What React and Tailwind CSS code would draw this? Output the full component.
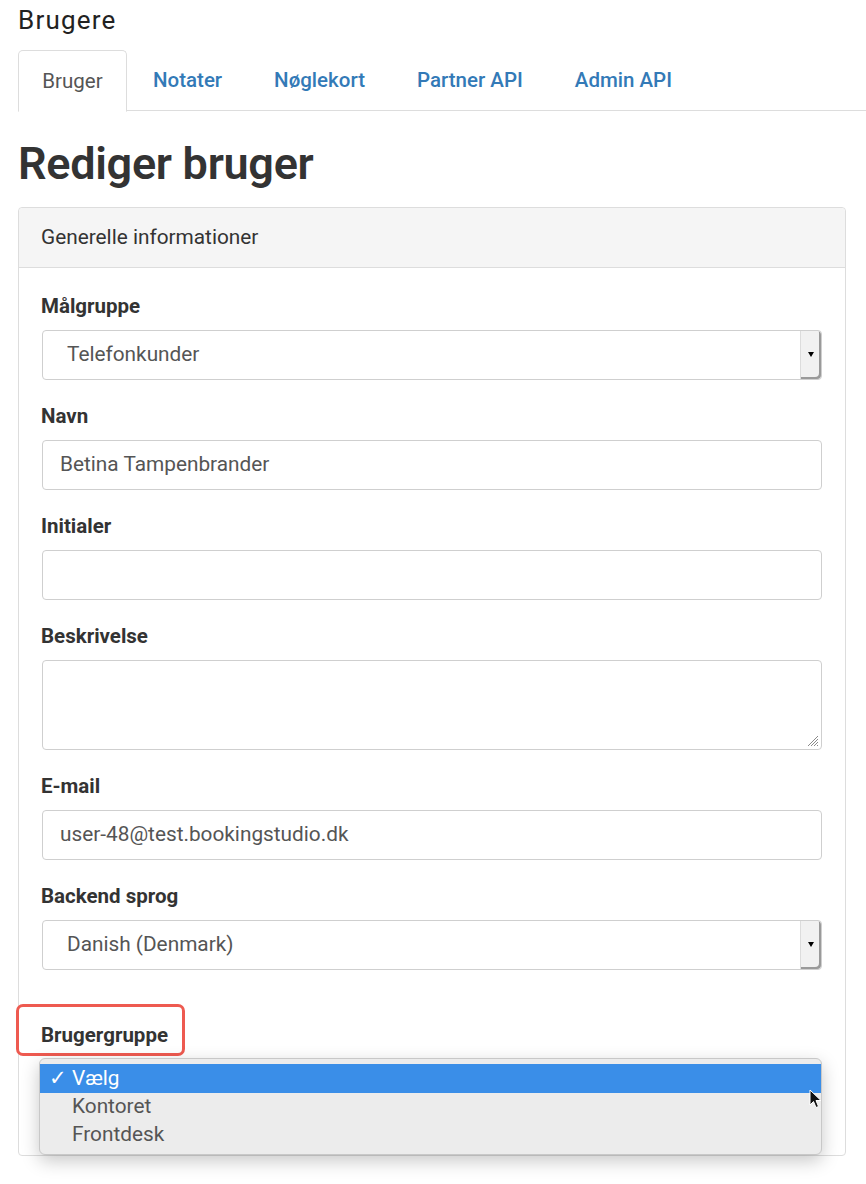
import React from 'react';

const TABS = ['Bruger', 'Notater', 'Nøglekort', 'Partner API', 'Admin API'];

function Label({ children }) {
  return <div className="h-[22px] mb-[13px] text-[20.5px] leading-[22px] font-bold text-[#333]">{children}</div>;
}

function TextInput({ value }) {
  return (
    <div className="h-[50px] w-[780px] ml-px rounded-[4px] border border-[#cfcfcf] bg-white px-[17px] flex items-center text-[20.8px] text-[#555]">
      {value}
    </div>
  );
}

function SelectBox({ value }) {
  return (
    <div className="h-[50px] w-[780px] ml-px rounded-[4px] border border-[#cfcfcf] bg-white flex items-center text-[20.8px] text-[#555]">
      <div className="flex-1 pl-[24px]">{value}</div>
      <div className="h-[48px] w-[21px] bg-[#f1f1f1] border-l border-[#dcdcdc] rounded-r-[4px] shadow-[inset_-2px_-2px_0_#9a9a9a] flex items-center justify-center">
        <span className="block w-0 h-0 border-l-[3.5px] border-r-[3.5px] border-t-[5px] border-l-transparent border-r-transparent border-t-black -mt-[2px] -ml-[1px]" />
      </div>
    </div>
  );
}

export default function App() {
  return (
    <div className="min-h-[1184px] bg-white pl-[18px] font-['Roboto',sans-serif] text-[#333]">
      <div className="pt-[5px] h-[50px] text-[26px] leading-[30px] tracking-[1.2px] text-[#222]">Brugere</div>

      {/* tabs */}
      <div className="flex border-b border-[#dddddd] h-[61px]">
        {TABS.map((t, i) =>
          i === 0 ? (
            <div
              key={t}
              className="w-[109px] h-[62px] -mb-px border border-[#dddddd] border-b-white bg-white rounded-t-[5px] flex items-center justify-center text-[20.5px] text-[#555]"
            >
              {t}
            </div>
          ) : (
            <div key={t} className="h-full flex items-center px-[26px] text-[20.5px] font-medium text-[#337ab7]">
              {t}
            </div>
          )
        )}
      </div>

      <h1 className="mt-[28px] h-[57px] text-[45px] leading-[50px] font-semibold text-[#333] tracking-[-0.3px]">Rediger bruger</h1>

      {/* panel */}
      <div className="mt-[11px] w-[828px] border border-[#dddddd] rounded-[4px] bg-white">
        <div className="h-[60px] bg-[#f5f5f5] border-b border-[#dddddd] rounded-t-[4px] pl-[22px] flex items-center text-[20.8px] text-[#333]">
          Generelle informationer
        </div>

        <div className="pt-[27px] pl-[22px]">
          <div className="mb-[25px]">
            <Label>Målgruppe</Label>
            <SelectBox value="Telefonkunder" />
          </div>
          <div className="mb-[25px]">
            <Label>Navn</Label>
            <TextInput value="Betina Tampenbrander" />
          </div>
          <div className="mb-[25px]">
            <Label>Initialer</Label>
            <TextInput value="" />
          </div>
          <div className="mb-[25px]">
            <Label>Beskrivelse</Label>
            <div className="relative h-[90px] w-[780px] ml-px rounded-[4px] border border-[#cfcfcf] bg-white">
              <svg className="absolute right-[2px] bottom-[2px]" width="14" height="14" viewBox="0 0 14 14">
                <path d="M13 3 L3 13 M13 6 L6 13 M13 9 L9 13 M13 12 L12 13" stroke="#8a8a8a" strokeWidth="1" />
              </svg>
            </div>
          </div>
          <div className="mb-[25px]">
            <Label>E-mail</Label>
            <TextInput value="user-48@test.bookingstudio.dk" />
          </div>
          <div className="mb-[54px]">
            <Label>Backend sprog</Label>
            <SelectBox value="Danish (Denmark)" />
          </div>

          <div className="relative">
            <div className="absolute -left-[25px] -top-[20px] w-[169px] h-[52px] rounded-[7px] border-[3px] border-[#ee5a50]" />
            <div className="h-[22px] text-[20.5px] leading-[22px] font-bold text-[#333]">Brugergruppe</div>
          </div>

          {/* open select list */}
          <div className="relative mt-[12px] -ml-[2px] w-[783px] h-[97px] rounded-[6px] bg-[#ececec] border border-[#c8c8c8] shadow-[0_6px_18px_rgba(0,0,0,0.22)] pt-[5px] text-[20.8px]">
            <div className="h-[29px] bg-[#3a8ee8] text-white flex items-center pl-[9px]">
              <span className="w-[23px]">✓</span>Vælg
            </div>
            <div className="h-[28px] flex items-center pl-[32px] text-[#555]">Kontoret</div>
            <div className="h-[28px] flex items-center pl-[32px] text-[#555]">Frontdesk</div>
            <svg className="absolute left-[769px] top-[30px]" width="14" height="22" viewBox="0 0 14 22">
              <path d="M1 1 L1 16 L4.5 12.5 L7 18.5 L9.5 17.5 L7 11.5 L12 11.5 Z" fill="#111" stroke="#fff" strokeWidth="1" />
            </svg>
          </div>
        </div>
      </div>
    </div>
  );
}
